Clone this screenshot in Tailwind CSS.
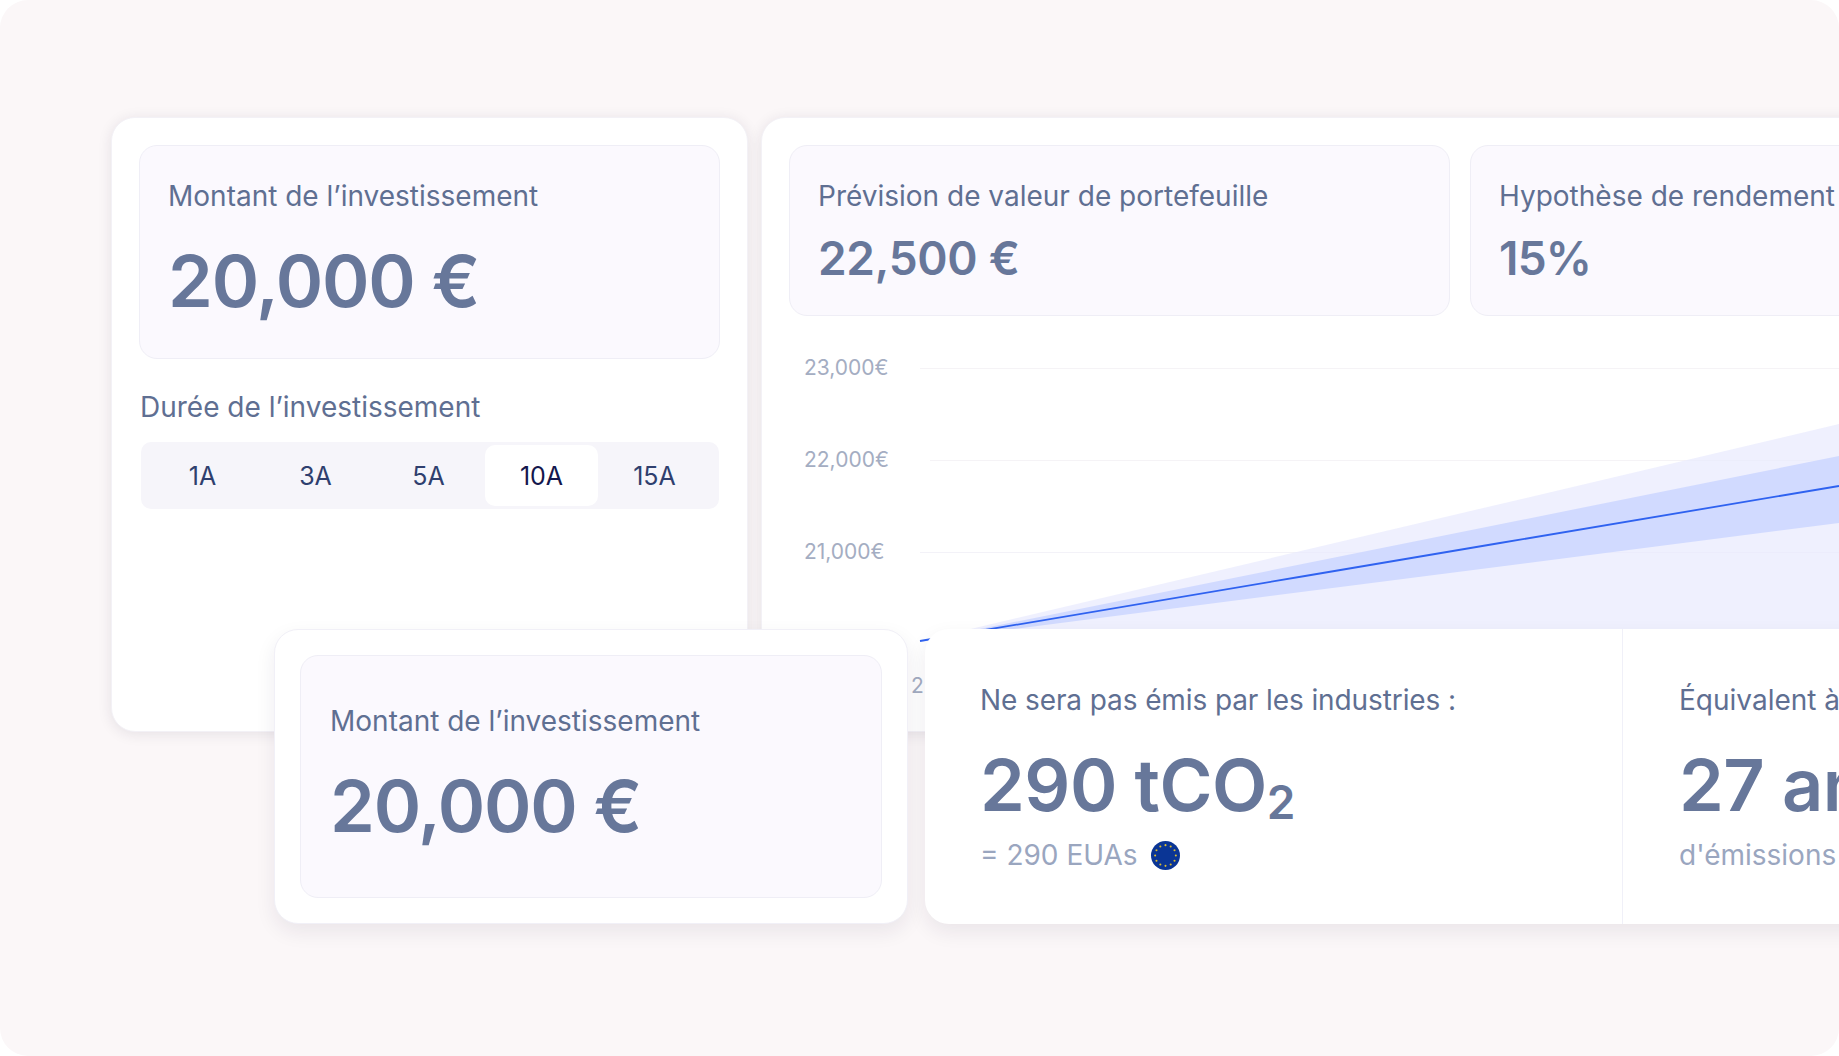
<!DOCTYPE html>
<html lang="fr">
  <head>
    <meta charset="UTF-8" />
    <meta name="viewport" content="width=device-width, initial-scale=1.0" />
    <title>Simulateur d'investissement</title>
    <script src="https://cdn.jsdelivr.net/npm/@tailwindcss/browser@4"></script>
  </head>
  <body class="bg-white">
    <div class="relative w-[1839px] h-[1056px] overflow-hidden rounded-[28px] bg-[#fbf7f8] font-[family-name:Inter,sans-serif] text-[#5f6f92]">
      <!-- back row -->
      <div class="flex gap-[13px] pt-[117px] pl-[111px]">
        <div class="w-[637px] h-[615px] shrink-0 p-[27px] bg-white rounded-[24px] border border-[#f3f1f6] shadow-[0_2px_14px_rgba(40,30,60,0.10)]">
          <div class="h-[214px] pt-[32px] px-[28px] bg-[#fbf9fe] border border-[#efeef6] rounded-[18px]">
            <p class="text-[28px] leading-[36px]">Montant de l’investissement</p>
            <p class="mt-[27px] text-[72px] leading-[80px] font-semibold tracking-[-1.2px] text-[#67779a]">20,000 €</p>
          </div>
          <p class="mt-[30px] ml-[1px] text-[28px] leading-[36px]">Durée de l’investissement</p>
          <div class="mt-[17px] ml-[2px] mr-[1px] h-[67px] grid grid-cols-[repeat(5,113px)] items-center pl-[5px] bg-[#f6f5fa] rounded-[10px] text-[25px] text-[#2f3f6e]">
            <span class="pt-[2px] text-center">1A</span>
            <span class="pt-[2px] text-center">3A</span>
            <span class="pt-[2px] text-center">5A</span>
            <span class="h-[61px] pt-[2px] flex items-center justify-center bg-white rounded-[10px] text-[#14174d]">10A</span>
            <span class="pt-[2px] text-center">15A</span>
          </div>
        </div>

        <div class="relative w-[1200px] h-[615px] shrink-0 p-[27px] bg-white rounded-[24px] border border-[#f3f1f6] shadow-[0_2px_14px_rgba(40,30,60,0.10)]">
          <div class="flex gap-[20px]">
            <div class="w-[661px] h-[171px] shrink-0 pt-[32px] px-[28px] bg-[#fbf9fe] border border-[#efeef6] rounded-[18px]">
              <p class="text-[28px] leading-[36px] whitespace-nowrap">Prévision de valeur de portefeuille</p>
              <p class="mt-[16px] text-[46px] leading-[56px] font-semibold tracking-[-0.3px] text-[#67779a]">22,500 €</p>
            </div>
            <div class="w-[660px] h-[171px] shrink-0 pt-[32px] px-[28px] bg-[#fbf9fe] border border-[#efeef6] rounded-[18px]">
              <p class="text-[28px] leading-[36px] whitespace-nowrap">Hypothèse de rendement</p>
              <p class="mt-[16px] text-[46px] leading-[56px] font-semibold tracking-[-0.8px] text-[#67779a]">15%</p>
            </div>
          </div>
          <div class="mt-[6px] text-[21px] text-[#a4adc2]">
            <div class="h-[92px] flex items-center pl-[15px]"><span class="w-[116px] shrink-0">23,000€</span><span class="flex-1 h-px bg-[#f5f3f6]"></span></div>
            <div class="h-[92px] flex items-center pl-[15px]"><span class="w-[126px] shrink-0">22,000€</span><span class="flex-1 h-px bg-[#f5f3f6]"></span></div>
            <div class="h-[92px] flex items-center pl-[15px]"><span class="w-[116px] shrink-0">21,000€</span><span class="flex-1 h-px bg-[#f3f2f8]"></span></div>
          </div>
          <span class="absolute left-[149px] top-[555px] text-[21px] leading-[26px] text-[#a4adc2]">2</span>
          <svg class="absolute left-0 top-0" width="1077" height="614" viewBox="762 118 1077 614">
            <polygon points="920,641 1839,424 1839,641" fill="#e8eafe" fill-opacity="0.7" />
            <polygon points="920,641 1839,456 1839,523" fill="#d1daff" />
            <polyline points="920,641 1305,576 1500,543 1839,486" fill="none" stroke="#2f62f0" stroke-width="1.8" />
          </svg>
        </div>
      </div>

      <!-- cards lying over the back row -->
      <div class="absolute left-[274px] top-[629px] flex gap-[17px]">
        <div class="w-[634px] h-[295px] shrink-0 p-[25px] bg-white rounded-[24px] border border-[#f1f0f7] shadow-[0_8px_20px_rgba(40,30,60,0.08)]">
          <div class="h-[243px] pt-[47px] px-[29px] bg-[#fbf9fe] border border-[#efeef6] rounded-[18px]">
            <p class="text-[28px] leading-[36px]">Montant de l’investissement</p>
            <p class="mt-[27px] text-[72px] leading-[80px] font-semibold tracking-[-1.2px] text-[#67779a]">20,000 €</p>
          </div>
        </div>

        <div class="w-[1000px] h-[295px] shrink-0 flex bg-white rounded-l-[24px] shadow-[0_8px_20px_rgba(40,30,60,0.08)]">
          <div class="w-[698px] shrink-0 pt-[53px] pl-[55px] border-r border-[#f0f0f8]">
            <p class="text-[28px] leading-[36px] tracking-[-0.1px]">Ne sera pas émis par les industries :</p>
            <p class="mt-[27px] h-[80px] text-[72px] leading-[80px] font-semibold tracking-[-0.5px] text-[#67779a] whitespace-nowrap">290 tCO<span class="text-[46px] leading-none align-[-8px]">2</span></p>
            <div class="mt-[12px] flex items-center gap-[13px] text-[28px] leading-[36px] text-[#9aa6bf]">
              <span>= 290 EUAs</span>
              <svg width="29" height="29" viewBox="0 0 28 28">
                <circle cx="14" cy="14" r="14" fill="#0a3595" />
                <g fill="#dcbc2e">
                  <circle cx="14" cy="4" r="1" />
                  <circle cx="19" cy="5.3" r="1" />
                  <circle cx="22.7" cy="9" r="1" />
                  <circle cx="24" cy="14" r="1" />
                  <circle cx="22.7" cy="19" r="1" />
                  <circle cx="19" cy="22.7" r="1" />
                  <circle cx="14" cy="24" r="1" />
                  <circle cx="9" cy="22.7" r="1" />
                  <circle cx="5.3" cy="19" r="1" />
                  <circle cx="4" cy="14" r="1" />
                  <circle cx="5.3" cy="9" r="1" />
                  <circle cx="9" cy="5.3" r="1" />
                </g>
              </svg>
            </div>
          </div>
          <div class="flex-1 pt-[53px] pl-[56px]">
            <p class="text-[28px] leading-[36px] whitespace-nowrap">Équivalent à</p>
            <p class="mt-[27px] text-[72px] leading-[80px] font-semibold tracking-[-0.5px] text-[#67779a] whitespace-nowrap">27 ans</p>
            <p class="mt-[12px] text-[28px] leading-[36px] text-[#9aa6bf] whitespace-nowrap">d'émissions</p>
          </div>
        </div>
      </div>
    </div>
  </body>
</html>
